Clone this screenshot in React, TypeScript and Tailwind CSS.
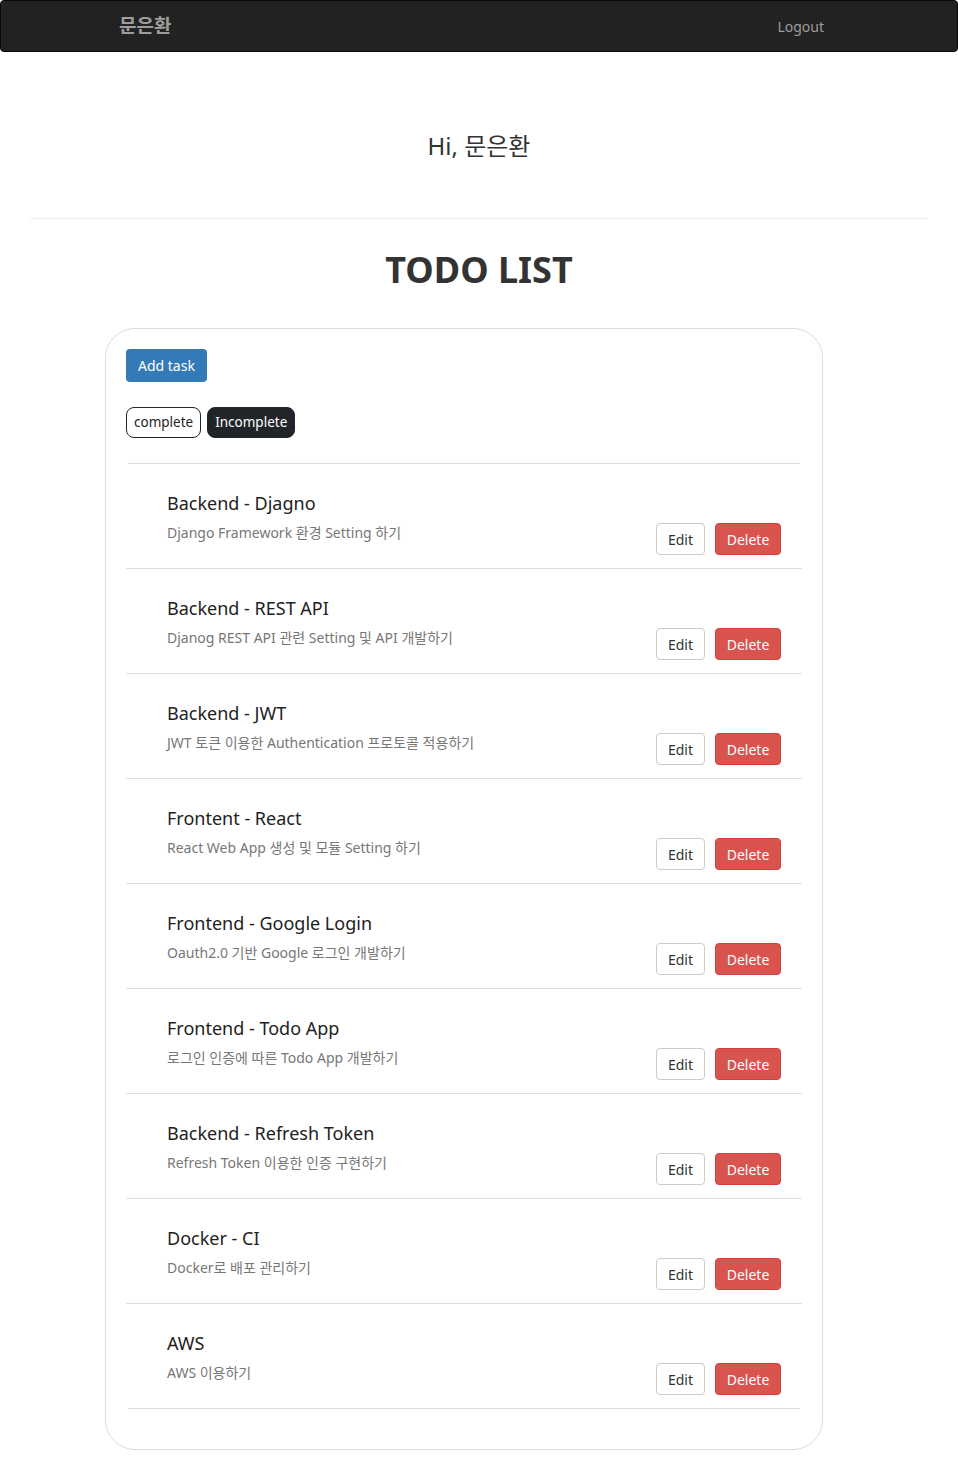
import { useState } from "react";

interface Todo {
	id: number;
	title: string;
	description: string;
	completed: boolean;
}

const todos: Todo[] = [
	{ id: 1, title: "Backend - Djagno", description: "Django Framework 환경 Setting 하기", completed: false },
	{ id: 2, title: "Backend - REST API", description: "Djanog REST API 관련 Setting 및 API 개발하기", completed: false },
	{ id: 3, title: "Backend - JWT", description: "JWT 토큰 이용한 Authentication 프로토콜 적용하기", completed: false },
	{ id: 4, title: "Frontent - React", description: "React Web App 생성 및 모듈 Setting 하기", completed: false },
	{ id: 5, title: "Frontend - Google Login", description: "Oauth2.0 기반 Google 로그인 개발하기", completed: false },
	{ id: 6, title: "Frontend - Todo App", description: "로그인 인증에 따른 Todo App 개발하기", completed: false },
	{ id: 7, title: "Backend - Refresh Token", description: "Refresh Token 이용한 인증 구현하기", completed: false },
	{ id: 8, title: "Docker - CI", description: "Docker로 배포 관리하기", completed: false },
	{ id: 9, title: "AWS", description: "AWS 이용하기", completed: false },
];

export default function App() {
	const [viewCompleted, setViewCompleted] = useState(false);
	const items = todos.filter((t) => t.completed === viewCompleted);

	return (
		<div className="min-h-screen bg-white font-['Noto_Sans','Noto_Sans_CJK_KR',sans-serif] text-[#333]">
			<nav className="h-[52px] bg-[#222] border border-[#080808] rounded-[4px]">
				<div className="w-[750px] mx-auto px-[15px] h-full flex items-center justify-between">
					<a className="text-[19px] font-bold text-[#9d9d9d] leading-[20px]">문은환</a>
					<a className="text-[14px] text-[#9d9d9d] pr-[15px]">Logout</a>
				</div>
			</nav>

			<div className="px-[30px]">
				<h2 className="mt-[77px] text-center text-[24px] leading-[34px] text-[#333]">Hi, 문은환</h2>
				<hr className="mt-[55px] border-[#eee]" />
				<h1 className="mt-[31px] text-center text-[36px] leading-[40px] font-bold text-[#333]">TODO LIST</h1>

				<div className="mt-[38px] mb-[30px] ml-[75px] w-[718px] border border-[#ddd] rounded-[30px] px-[20px] pt-[20px] pb-[40px]">
					<button className="h-[33px] px-[12px] bg-[#337ab7] text-white text-[14px] rounded-[4px]">
						Add task
					</button>
					<div className="mt-[25px] flex gap-[6px]">
						<button
							onClick={() => setViewCompleted(true)}
							className={
								viewCompleted
									? "h-[31px] px-[7px] rounded-[8px] border border-[#212529] bg-[#212529] text-white text-[13.5px]"
									: "h-[31px] px-[7px] rounded-[8px] border border-[#212529] bg-white text-[#212529] text-[13.5px]"
							}
						>
							complete
						</button>
						<button
							onClick={() => setViewCompleted(false)}
							className={
								viewCompleted
									? "h-[31px] px-[7px] rounded-[8px] border border-[#212529] bg-white text-[#212529] text-[13.5px]"
									: "h-[31px] px-[7px] rounded-[8px] border border-[#212529] bg-[#212529] text-white text-[13.5px]"
							}
						>
							Incomplete
						</button>
					</div>
					<hr className="mt-[25px] mx-[2px] border-[#ddd]" />

					<ul>
						{items.map((item) => (
							<li
								key={item.id}
								className="h-[105px] last:h-[104px] border-b last:border-b-0 border-[#ddd] pl-[41px] pr-[21px] pt-[26px] flex justify-between items-start"
							>
								<div>
									<div className="text-[18px] leading-[26px] text-[#222]">{item.title}</div>
									<div className="mt-[7px] text-[14px] leading-[20px] text-[#777]">{item.description}</div>
								</div>
								<div className="mt-[33px] flex gap-[10px]">
									<button className="h-[32px] w-[49px] border border-[#ccc] rounded-[4px] bg-white text-[14px] text-[#333]">
										Edit
									</button>
									<button className="h-[32px] w-[66px] rounded-[4px] bg-[#d9534f] border border-[#d43f3a] text-[14px] text-white">
										Delete
									</button>
								</div>
							</li>
						))}
					</ul>
					<hr className="mx-[2px] border-[#ddd]" />
				</div>
			</div>
		</div>
	);
}
